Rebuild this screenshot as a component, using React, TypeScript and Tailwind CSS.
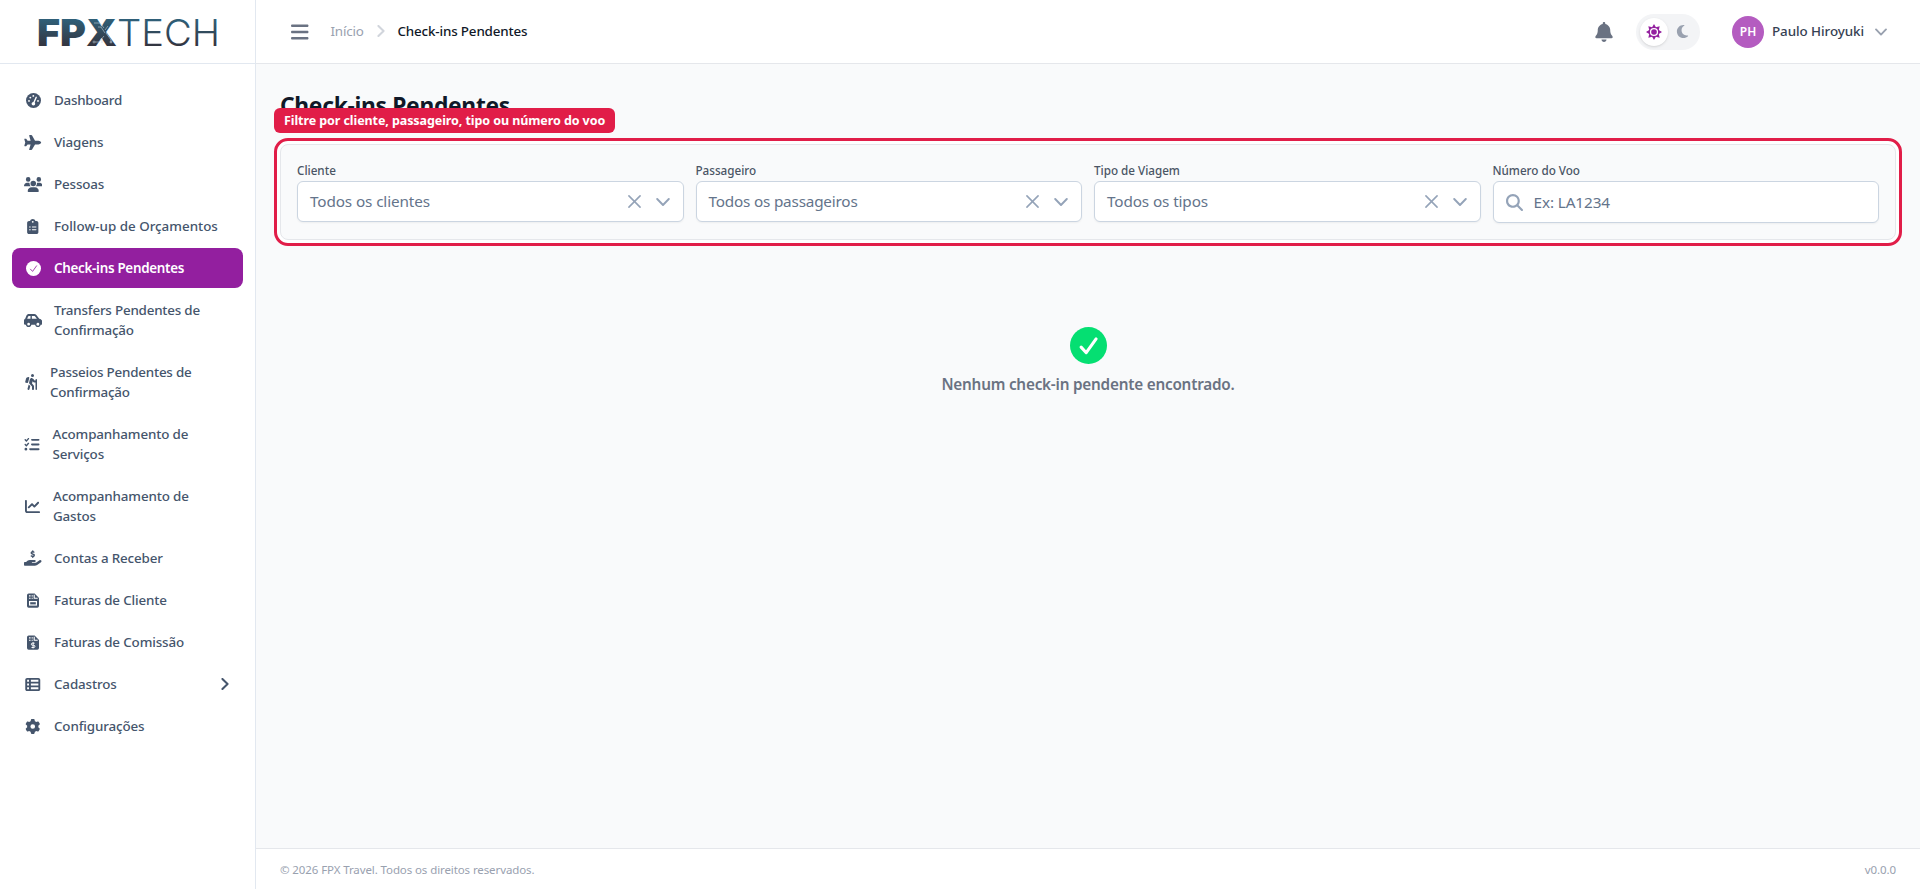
import React from 'react';
import {
  FaBars, FaBell, FaCarSide, FaChartLine, FaClipboardList, FaGear, FaHandHoldingDollar, FaListCheck,
  FaMagnifyingGlass, FaMoon, FaPersonHiking, FaPlane, FaTableList, FaUsers,
} from 'react-icons/fa6';

interface NavItem {
  label: string;
  icon: React.ReactNode;
  iconBox?: string;
  tracking?: string;
  active?: boolean;
  hasChildren?: boolean;
}

interface IconProps {
  className?: string;
}

const CheckCircle: React.FC<IconProps & { mark: string; stroke: number }> = ({ className, mark, stroke }) => (
  <svg viewBox="0 0 36 36" className={className} fill="none">
    <circle cx="18" cy="18" r="18" fill="currentColor" />
    <path d="M10.8 19.6 L15.8 25 L25.4 11.6" className={mark} strokeWidth={stroke} strokeLinecap="round" strokeLinejoin="round" />
  </svg>
);

const ChevronIcon: React.FC<IconProps> = ({ className }) => (
  <svg viewBox="0 0 14 14" className={className} fill="none" stroke="currentColor" strokeLinecap="round" strokeLinejoin="round">
    <path d="M1.2 4 L7 10 L12.8 4" />
  </svg>
);

const CloseIcon: React.FC<IconProps> = ({ className }) => (
  <svg viewBox="0 0 14 14" className={className} fill="none" stroke="currentColor" strokeWidth="1.7" strokeLinecap="round">
    <path d="M1 1 L13 13 M13 1 L1 13" />
  </svg>
);

const SunIcon: React.FC<IconProps> = ({ className }) => (
  <svg viewBox="0 0 16 16" className={className}>
    <path
      fill="currentColor"
      fillRule="evenodd"
      d="M8 0 L9.9 3.2 L13.66 2.34 L12.8 6.1 L16 8 L12.8 9.9 L13.66 13.66 L9.9 12.8 L8 16 L6.1 12.8 L2.34 13.66 L3.2 9.9 L0 8 L3.2 6.1 L2.34 2.34 L6.1 3.2 Z M8 3.9 A4.1 4.1 0 1 0 8 12.1 A4.1 4.1 0 1 0 8 3.9 Z"
    />
    <circle cx="8" cy="8" r="2.8" fill="currentColor" />
  </svg>
);

const GaugeIcon: React.FC<IconProps> = ({ className }) => (
  <svg viewBox="0 0 16 16" className={className}>
    <circle cx="8" cy="8" r="8" fill="currentColor" />
    <g fill="white">
      <circle cx="3.2" cy="8.4" r="1" />
      <circle cx="4.6" cy="4.9" r="1" />
      <circle cx="7.8" cy="3.1" r="1" />
      <circle cx="12.8" cy="8.4" r="1" />
      <circle cx="7.9" cy="11.5" r="1.9" />
    </g>
    <path d="M8.1 11 L10.9 4.6" stroke="white" strokeWidth="1.5" strokeLinecap="round" />
  </svg>
);

const InvoiceIcon: React.FC<IconProps & { children: React.ReactNode }> = ({ className, children }) => (
  <svg viewBox="0 0 12 15" className={className}>
    <path d="M2 0.5 H7.6 L12 4.9 V13 a1.7 1.7 0 0 1 -1.7 1.7 H1.7 A1.7 1.7 0 0 1 0 13 V2.2 A1.7 1.7 0 0 1 1.7 0.5 Z" fill="currentColor" />
    <path d="M7.2 1.8 V5.3 H10.7 M2 2.9 H3.6 M4.6 2.9 H5.8 M2 5.2 H3.6 M4.6 5.2 H5.8" stroke="white" strokeWidth="1.1" fill="none" />
    {children}
  </svg>
);

const Logo: React.FC = () => (
  <svg width="190" height="50" viewBox="-1 -9 190 50" aria-label="FPX Tech">
    <defs>
      <linearGradient id="logo" x1="0" y1="3" x2="0" y2="30" gradientUnits="userSpaceOnUse">
        <stop offset="0" stopColor="#2f6079" />
        <stop offset="1" stopColor="#33343f" />
      </linearGradient>
    </defs>
    <g fill="url(#logo)" className="font-['Inter',sans-serif]">
      <text x="-1" y="29.5" fontSize="37" fontWeight="900" textLength="80" lengthAdjust="spacingAndGlyphs">FPX</text>
      <text x="79" y="29.5" fontSize="37" fontWeight="300" textLength="103" lengthAdjust="spacingAndGlyphs">TECH</text>
    </g>
    <g stroke="#c7d6df" strokeWidth="0.7" fill="none" opacity="0.8">
      <path d="M56 7 h6 l4 5 M60 11 h3 l4 6 M66 20 l-5 6 h-4 M68 17 l5 7 v3 M64 23 v4 M70 10 l-3 4" />
      <circle cx="56" cy="26" r="1" />
      <circle cx="73" cy="26" r="1" />
    </g>
  </svg>
);

const NAV_ITEMS: NavItem[] = [
  { label: 'Dashboard', icon: <GaugeIcon className="size-[15px]" />, tracking: 'tracking-[-0.25px]' },
  { label: 'Viagens', icon: <FaPlane className="h-[15px] w-[17.5px]" /> },
  { label: 'Pessoas', icon: <FaUsers className="h-[15px] w-[18.5px] shrink-0" /> },
  { label: 'Follow-up de Orçamentos', icon: <FaClipboardList className="h-[15px] w-[17.5px]" />, tracking: 'tracking-[0px]' },
  {
    label: 'Check-ins Pendentes',
    icon: <CheckCircle className="size-[15px]" mark="stroke-[#931f9f]" stroke={2} />,
    tracking: 'tracking-[-0.28px]',
    active: true,
  },
  { label: 'Transfers Pendentes de Confirmação', icon: <FaCarSide className="h-[15px] w-[18.5px] shrink-0" />, tracking: 'tracking-[-0.2px]' },
  { label: 'Passeios Pendentes de Confirmação', icon: <FaPersonHiking className="h-4 w-3.5" />, iconBox: 'w-3.5', tracking: 'tracking-[-0.2px]' },
  { label: 'Acompanhamento de Serviços', icon: <FaListCheck className="h-[15px] w-4" />, iconBox: 'w-[16.5px]' },
  { label: 'Acompanhamento de Gastos', icon: <FaChartLine className="h-[15px] w-[17px]" />, iconBox: 'w-[17px]' },
  { label: 'Contas a Receber', icon: <FaHandHoldingDollar className="h-4 w-[17.5px]" /> },
  {
    label: 'Faturas de Cliente',
    icon: (
      <InvoiceIcon className="h-[15px] w-3">
        <rect x="2.6" y="8.6" width="6.8" height="3.4" fill="none" stroke="white" strokeWidth="1.2" />
      </InvoiceIcon>
    ),
  },
  {
    label: 'Faturas de Comissão',
    icon: (
      <InvoiceIcon className="h-[15px] w-3">
        <path d="M7.6 8.2 H5.4 a1 1 0 0 0 0 2.1 H6.8 a1 1 0 0 1 0 2.2 H4.5 M6.1 7.2 V13.4" fill="none" stroke="white" strokeWidth="1" />
      </InvoiceIcon>
    ),
  },
  { label: 'Cadastros', icon: <FaTableList className="h-[15px] w-[17.5px]" />, hasChildren: true },
  { label: 'Configurações', icon: <FaGear className="h-[15px] w-[17.5px]" /> },
];

const SELECTS = [
  { label: 'Cliente', placeholder: 'Todos os clientes', tracking: 'tracking-[-0.12px]' },
  { label: 'Passageiro', placeholder: 'Todos os passageiros', tracking: 'tracking-[-0.2px]' },
  { label: 'Tipo de Viagem', placeholder: 'Todos os tipos', tracking: 'tracking-[-0.12px]' },
];

const Sidebar: React.FC = () => (
  <aside className="flex w-64 shrink-0 flex-col border-r border-[#e2e8f0] bg-white">
    <div className="flex h-16 items-center border-b border-[#e2e8f0] pl-[37px]">
      <Logo />
    </div>
    <nav className="flex flex-col gap-0.5 px-3 py-4">
      {NAV_ITEMS.map((item) => (
        <a
          key={item.label}
          className={`flex items-center gap-3 rounded-lg px-3 py-2.5 text-[13.4px] leading-5
            ${item.active ? 'bg-[#931f9f] font-semibold text-white' : 'font-medium text-[#45556c]'}`}
        >
          <span className={`flex shrink-0 justify-center ${item.iconBox ?? 'w-[18px]'}`}>{item.icon}</span>
          <span className={`flex-1 ${item.tracking ?? 'tracking-[-0.14px]'}`}>{item.label}</span>
          {item.hasChildren && <ChevronIcon className="size-3 -rotate-90 stroke-[2.4]" />}
        </a>
      ))}
    </nav>
  </aside>
);

const Header: React.FC = () => (
  <header className="flex h-16 shrink-0 items-center border-b border-gray-200 bg-white pr-[33px] pl-[35px]">
    <FaBars className="h-5 w-[17.5px] text-gray-500" />
    <div className="ml-[22px] flex items-center text-[13.4px]">
      <span className="w-[34px] tracking-[-0.2px] text-gray-400">Início</span>
      <ChevronIcon className="ml-2.5 size-3 -rotate-90 stroke-[2.4] text-gray-300" />
      <span className="ml-[11px] font-medium tracking-[-0.16px] text-gray-900">Check-ins Pendentes</span>
    </div>
    <div className="ml-auto flex items-center">
      <FaBell className="h-5 w-[18px] text-gray-500" />
      <div className="ml-[23px] flex h-9 w-16 items-center rounded-full bg-gray-100 p-1">
        <span className="flex size-7 items-center justify-center rounded-full bg-white shadow-sm">
          <SunIcon className="size-4 text-[#931f9f]" />
        </span>
        <span className="flex size-7 items-center justify-center">
          <FaMoon className="size-[15px] text-gray-400" />
        </span>
      </div>
      <div className="ml-8 flex size-8 items-center justify-center rounded-full bg-[#b45cc0] text-xs font-semibold text-white">PH</div>
      <span className="ml-2 w-[92px] text-[13.4px] font-medium tracking-[-0.07px] whitespace-nowrap text-gray-700">Paulo Hiroyuki</span>
      <ChevronIcon className="ml-[11px] size-3 stroke-[2.2] text-gray-400" />
    </div>
  </header>
);

const Filters: React.FC = () => (
  <section className="relative rounded-lg border border-gray-200 bg-gray-50 p-4 ring-3 ring-white outline-3 outline-offset-3 outline-[#e11d48]">
    <div className="absolute -top-[37px] -left-[7px] flex h-[25px] items-center rounded-md bg-[#e11d48] px-2.5 pt-px text-[12.5px] font-bold tracking-[-0.08px] whitespace-nowrap text-white">
      Filtre por cliente, passageiro, tipo ou número do voo
    </div>
    <div className="grid grid-cols-4 items-start gap-3">
      {SELECTS.map((field) => (
        <label key={field.label} className="flex flex-col gap-[3px] text-[11.7px] leading-4 font-medium tracking-[-0.02px] text-gray-600">
          <span className="pt-px">{field.label}</span>
          <span className="flex h-[41px] items-center rounded-md border border-[#cbd5e1] bg-white pr-[13px] pl-3 text-[15.3px] font-normal text-[#64748b] shadow-xs">
            <span className={`flex-1 pb-px ${field.tracking}`}>{field.placeholder}</span>
            <CloseIcon className="size-[13px] text-[#94a3b8]" />
            <ChevronIcon className="ml-[15px] size-3.5 stroke-[1.9] text-[#94a3b8]" />
          </span>
        </label>
      ))}
      <label className="flex flex-col gap-[3px] text-[11.7px] leading-4 font-medium tracking-[-0.02px] text-gray-600">
        <span className="pt-px">Número do Voo</span>
        <span className="flex h-[42px] items-center rounded-md border border-[#cbd5e1] bg-white pl-3 shadow-xs">
          <FaMagnifyingGlass className="size-[17px] text-[#94a3b8]" />
          <input
            className="ml-[11px] flex-1 text-[15.3px] font-normal tracking-[-0.1px] outline-none placeholder:text-[#64748b]"
            placeholder="Ex: LA1234"
          />
        </span>
      </label>
    </div>
  </section>
);

export default function App() {
  return (
    <div className="flex h-screen overflow-hidden bg-gray-50 font-['Noto_Sans','Open_Sans',sans-serif]">
      <Sidebar />
      <div className="flex min-w-0 flex-1 flex-col">
        <Header />
        <main className="flex-1 p-6">
          <h1 className="mb-[22px] pt-0.5 text-[22.8px] leading-8 font-bold tracking-[-0.3px] text-gray-900">Check-ins Pendentes</h1>
          <Filters />
          {/* Empty state */}
          <div className="flex flex-col items-center pt-[87px]">
            <CheckCircle className="size-[37px] text-green-400" mark="stroke-white" stroke={3} />
            <p className="mt-2 text-[15.3px] leading-6 font-semibold tracking-[-0.22px] text-gray-500">Nenhum check-in pendente encontrado.</p>
          </div>
        </main>
        <footer className="flex h-[41px] shrink-0 items-center justify-between border-t border-gray-200 bg-white px-6 pt-px text-[11.5px] tracking-[-0.1px] text-gray-400">
          <span>© 2026 FPX Travel. Todos os direitos reservados.</span>
          <span>v0.0.0</span>
        </footer>
      </div>
    </div>
  );
}
